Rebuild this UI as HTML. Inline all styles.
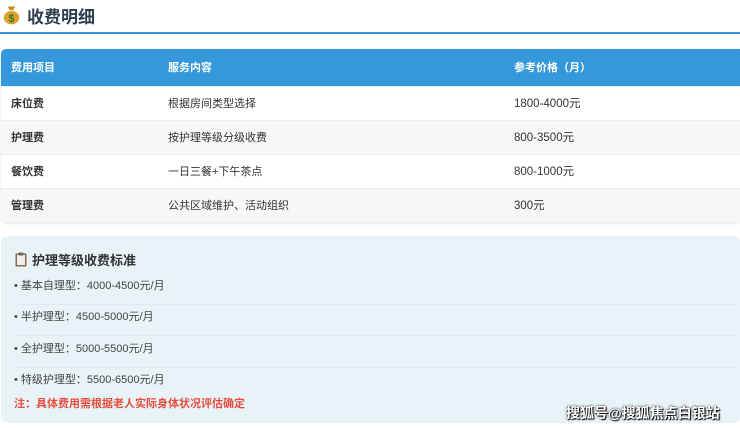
<!DOCTYPE html>
<html><head><meta charset="utf-8"><style>
*{margin:0;padding:0;box-sizing:border-box}
body{width:740px;height:428px;background:#fff;font-family:"Liberation Sans","Noto Sans CJK SC",sans-serif;color:#333;position:relative;overflow:hidden}
.title{position:absolute;left:3px;top:3px;height:24px;font-size:17px;font-weight:bold;color:#2c3e50;display:flex;align-items:center}
.title .ic{width:17px;height:20px;margin-right:7px}
.line{position:absolute;left:0;top:32px;width:740px;height:2px;background:#3498db}
table{position:absolute;left:1px;top:49px;width:739px;border-collapse:collapse;font-size:11px;box-shadow:0 1px 3px rgba(0,0,0,.12);border-radius:5px 0 0 5px;overflow:hidden}
th{background:#3498db;color:#fff;text-align:left;font-weight:bold;height:37px;padding-left:10px}
td{height:34px;padding-left:10px;border-top:1px solid #eee;background:#fff}
tr.g td{background:#f6f7f9}
td.n{font-size:11.5px}
td.b{font-weight:bold}
.box{position:absolute;left:1px;top:236px;width:739px;height:187px;background:#e8f3f8;border-radius:6px}
.box h3{position:absolute;left:14px;top:14px;font-size:13px;font-weight:bold;color:#333;display:flex;align-items:center}
.it{position:absolute;left:13px;width:720px;font-size:11px;color:#444;height:31px;border-bottom:1px solid #dde9ee}
.note{position:absolute;left:13px;top:159px;font-size:11px;font-weight:bold;color:#e74c3c}
.wm{position:absolute;left:566px;top:403px;font-size:14px;color:#fff;font-weight:bold;text-shadow:0 0 2px #000,1px 1px 1px #000}
</style></head><body>
<div class="title"><svg class="ic" viewBox="0 0 16 18"><path d="M4.5 1h7l-2 3.5h-3z" fill="#c98a1a"/><ellipse cx="8" cy="11.5" rx="7.3" ry="6.3" fill="#e0a12a"/><text x="8" y="15.5" font-size="10" text-anchor="middle" fill="#2a7a2a" font-weight="bold">$</text></svg>收费明细</div>
<div class="line"></div>
<table>
<tr><th style="width:157px">费用项目</th><th style="width:346px">服务内容</th><th>参考价格（月）</th></tr>
<tr><td class="b">床位费</td><td>根据房间类型选择</td><td class="n">1800-4000元</td></tr>
<tr class="g"><td class="b">护理费</td><td>按护理等级分级收费</td><td class="n">800-3500元</td></tr>
<tr><td class="b">餐饮费</td><td>一日三餐+下午茶点</td><td class="n">800-1000元</td></tr>
<tr class="g"><td class="b">管理费</td><td>公共区域维护、活动组织</td><td class="n">300元</td></tr>
</table>
<div class="box">
<h3><svg width="12" height="15" viewBox="0 0 12 15" style="margin-right:5px"><rect x="0.5" y="1.5" width="11" height="13" rx="1" fill="#8a6a4a"/><rect x="2" y="3" width="8" height="10" fill="#eee"/><rect x="3.5" y="0.5" width="5" height="3" rx="1" fill="#666"/></svg>护理等级收费标准</h3>
<div class="it" style="top:38px;line-height:24px">• 基本自理型：4000-4500元/月</div>
<div class="it" style="top:69px;line-height:24px">• 半护理型：4500-5000元/月</div>
<div class="it" style="top:101px;line-height:24px">• 全护理型：5000-5500元/月</div>
<div class="it" style="top:132px;line-height:24px;border-bottom:none">• 特级护理型：5500-6500元/月</div>
<div class="note">注：具体费用需根据老人实际身体状况评估确定</div>
</div>
<div class="wm">搜狐号@搜狐焦点白银站</div>
</body></html>
